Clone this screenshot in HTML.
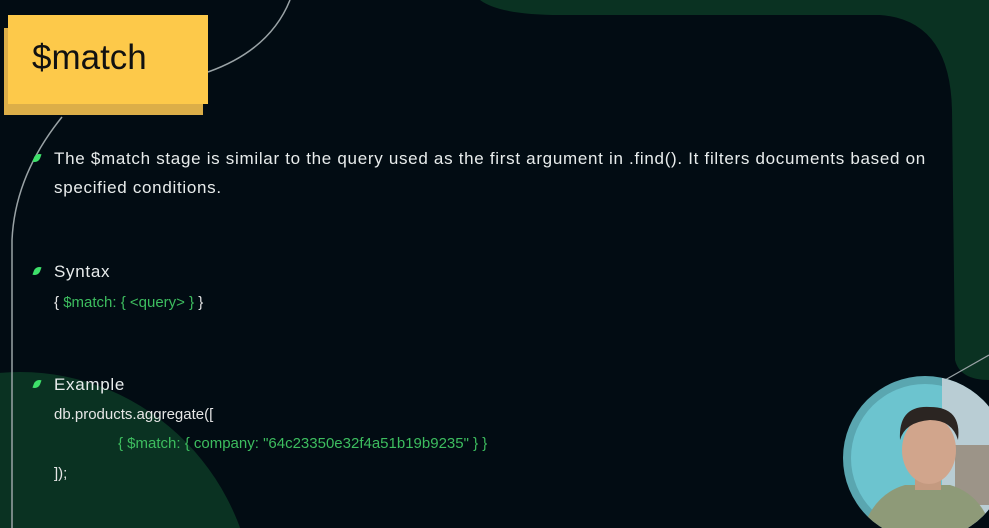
<!DOCTYPE html>
<html><head><meta charset="utf-8"><style>
html,body{margin:0;padding:0;width:989px;height:528px;overflow:hidden}
body{background:#020c13;position:relative;font-family:"Liberation Sans",sans-serif}
.t{position:absolute;color:#e8ecec;font-size:17px;letter-spacing:0.7px;white-space:nowrap}
.c{position:absolute;font-size:15px;white-space:nowrap;color:#e6e6e6}
.g{color:#3dbd5f}
.leaf{position:absolute;width:6px;height:10px;background:#3ee06a;border-radius:6px 0 6px 0;transform:rotate(20deg)}
</style></head><body>
<svg width="989" height="528" style="position:absolute;left:0;top:0">
<path d="M480,0 Q500,15 560,15 L880,15 Q950,20 952,110 L955,360 Q960,380 989,380 L989,0 Z" fill="#0a3222"/>
<ellipse cx="20" cy="612" rx="235" ry="240" fill="#0a3222"/>
<path d="M290,0 Q270,50 208,72" stroke="#9aa3a6" stroke-width="1.5" fill="none"/>
<path d="M62,117 Q15,175 12,240 L12,528" stroke="#9aa3a6" stroke-width="1.5" fill="none"/>
<path d="M945,380 L989,355" stroke="#9aa3a6" stroke-width="1.2" fill="none"/>
<defs><clipPath id="cc"><circle cx="925" cy="458" r="82"/></clipPath></defs>
<circle cx="925" cy="458" r="82" fill="#5aa6b0"/>
<g clip-path="url(#cc)">
<circle cx="925" cy="458" r="74" fill="#6cc4cf"/>
<rect x="942" y="370" width="60" height="170" fill="#b9cdd4"/>
<rect x="955" y="445" width="40" height="60" fill="#9c9488"/>
<path d="M860,540 Q870,495 905,485 L950,485 Q985,495 995,540 Z" fill="#8e9a78"/>
<rect x="915" y="465" width="26" height="25" fill="#c49a80"/>
<ellipse cx="929" cy="450" rx="27" ry="34" fill="#d1a58c"/>
<path d="M900,440 Q898,405 930,407 Q962,407 958,440 Q952,420 930,420 Q905,422 900,440Z" fill="#2b2522"/>
</g>
</svg>
<div style="position:absolute;left:4px;top:28px;width:199px;height:87px;background:#dcae48"></div>
<div style="position:absolute;left:8px;top:15px;width:200px;height:89px;background:#fdc94a"></div>
<div style="position:absolute;left:32px;top:38px;font-size:35px;color:#111">$match</div>
<div class="leaf" style="left:34px;top:153px"></div>
<div class="t" style="left:54px;top:149px">The $match stage is similar to the query used as the first argument in .find(). It filters documents based on</div>
<div class="t" style="left:54px;top:178px">specified conditions.</div>
<div class="leaf" style="left:34px;top:266px"></div>
<div class="t" style="left:54px;top:262px">Syntax</div>
<div class="c" style="left:54px;top:294px">{ <span class="g">$match: { &lt;query&gt; }</span> }</div>
<div class="leaf" style="left:34px;top:379px"></div>
<div class="t" style="left:54px;top:375px">Example</div>
<div class="c" style="left:54px;top:406px">db.products.aggregate([</div>
<div class="c g" style="left:118px;top:435px">{ $match: { company: "64c23350e32f4a51b19b9235" } }</div>
<div class="c" style="left:54px;top:465px">]);</div>
</body></html>
